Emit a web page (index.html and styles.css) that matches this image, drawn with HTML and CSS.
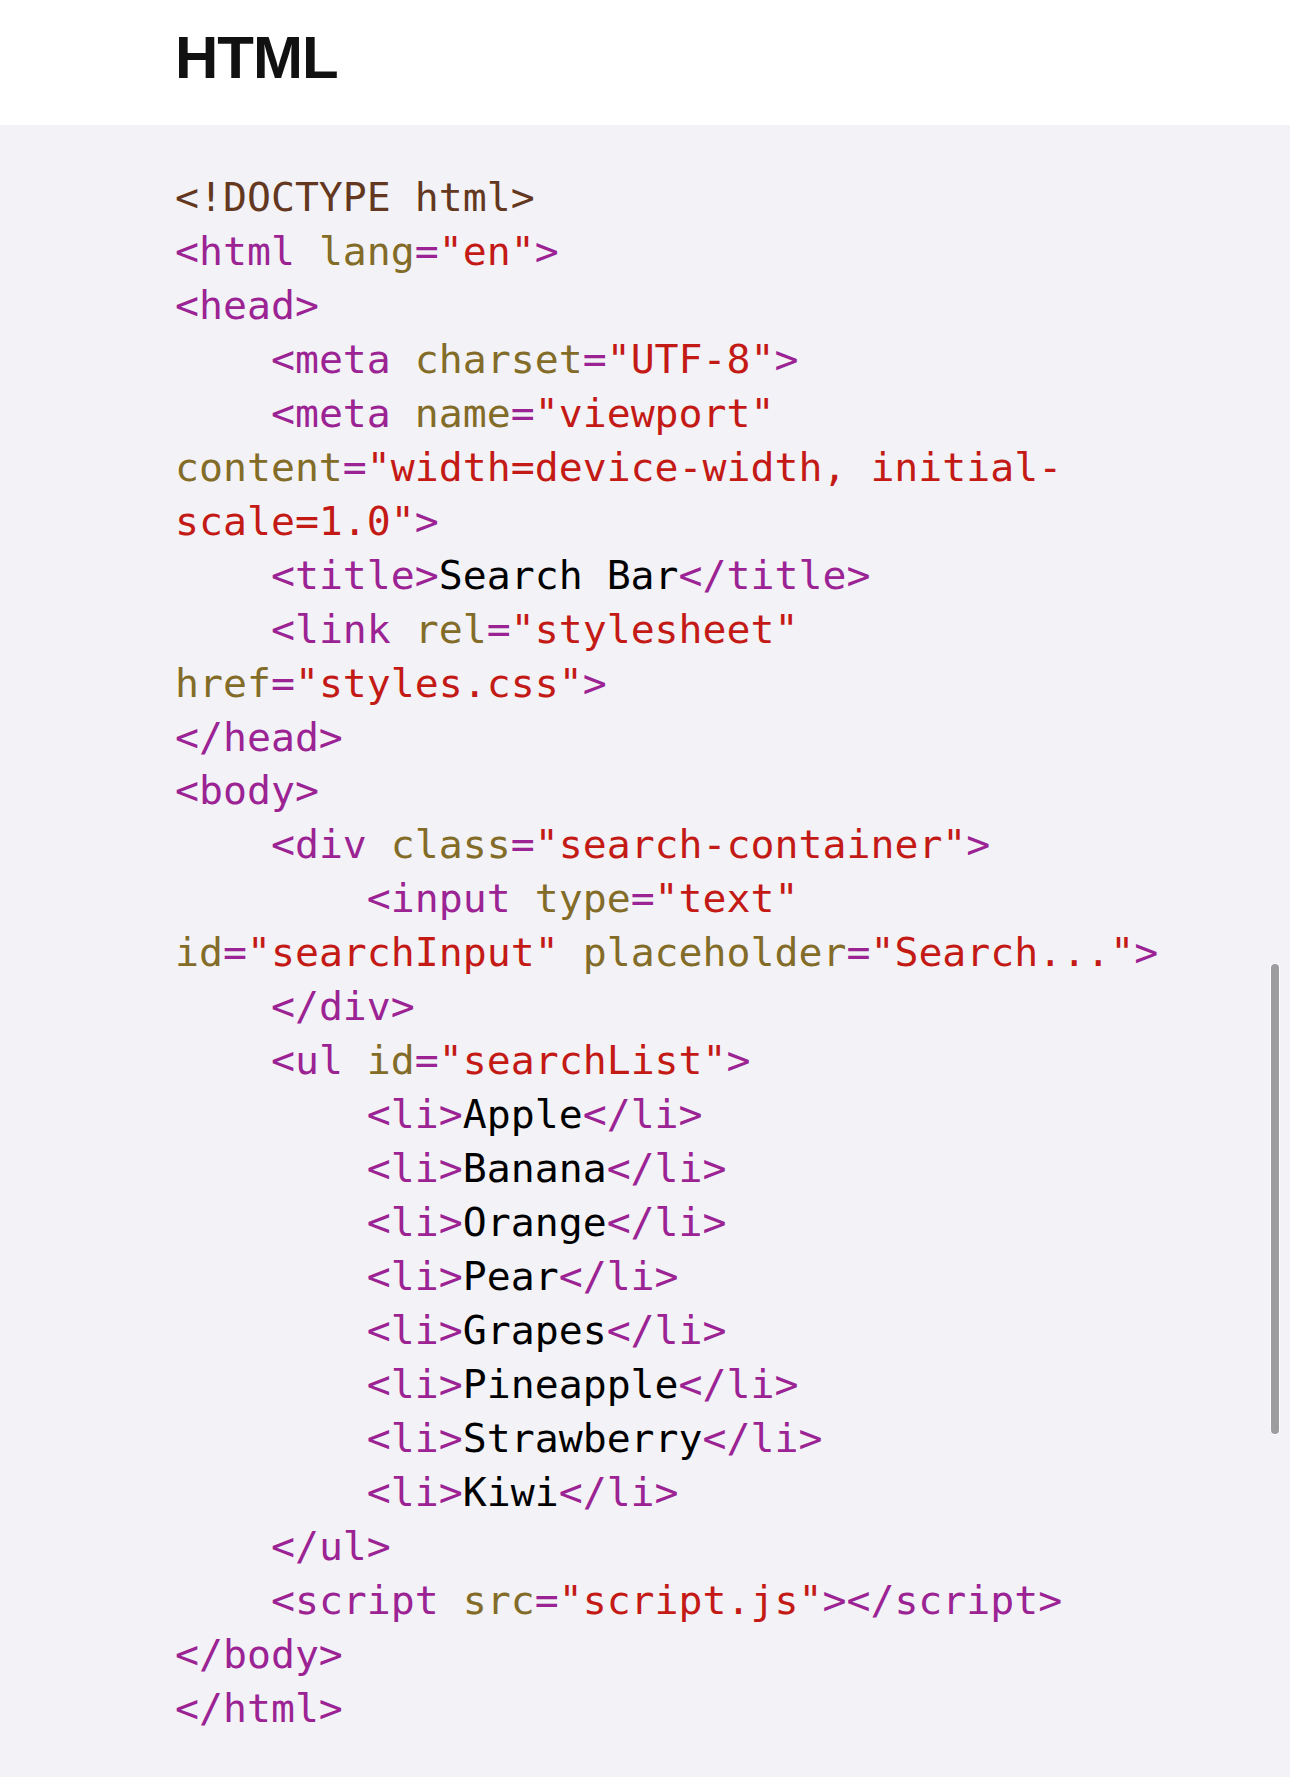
FILE: index.html
```html
<!DOCTYPE html>
<html lang="en">
<head>
<meta charset="UTF-8">
<title>HTML</title>
<link rel="stylesheet" href="styles.css">
</head>
<body>
<header class="page-head">
  <h1 class="title">HTML</h1>
</header>
<main class="code-area">
<pre class="code"><span class="dt">&lt;!DOCTYPE html&gt;</span>
<span class="tg">&lt;html</span> <span class="at">lang</span><span class="tg">=</span><span class="st">"en"</span><span class="tg">&gt;</span>
<span class="tg">&lt;head&gt;</span>
    <span class="tg">&lt;meta</span> <span class="at">charset</span><span class="tg">=</span><span class="st">"UTF-8"</span><span class="tg">&gt;</span>
    <span class="tg">&lt;meta</span> <span class="at">name</span><span class="tg">=</span><span class="st">"viewport"</span>
<span class="at">content</span><span class="tg">=</span><span class="st">"width=device-width, initial-</span>
<span class="st">scale=1.0"</span><span class="tg">&gt;</span>
    <span class="tg">&lt;title&gt;</span>Search Bar<span class="tg">&lt;/title&gt;</span>
    <span class="tg">&lt;link</span> <span class="at">rel</span><span class="tg">=</span><span class="st">"stylesheet"</span>
<span class="at">href</span><span class="tg">=</span><span class="st">"styles.css"</span><span class="tg">&gt;</span>
<span class="tg">&lt;/head&gt;</span>
<span class="tg">&lt;body&gt;</span>
    <span class="tg">&lt;div</span> <span class="at">class</span><span class="tg">=</span><span class="st">"search-container"</span><span class="tg">&gt;</span>
        <span class="tg">&lt;input</span> <span class="at">type</span><span class="tg">=</span><span class="st">"text"</span>
<span class="at">id</span><span class="tg">=</span><span class="st">"searchInput"</span> <span class="at">placeholder</span><span class="tg">=</span><span class="st">"Search..."</span><span class="tg">&gt;</span>
    <span class="tg">&lt;/div&gt;</span>
    <span class="tg">&lt;ul</span> <span class="at">id</span><span class="tg">=</span><span class="st">"searchList"</span><span class="tg">&gt;</span>
        <span class="tg">&lt;li&gt;</span>Apple<span class="tg">&lt;/li&gt;</span>
        <span class="tg">&lt;li&gt;</span>Banana<span class="tg">&lt;/li&gt;</span>
        <span class="tg">&lt;li&gt;</span>Orange<span class="tg">&lt;/li&gt;</span>
        <span class="tg">&lt;li&gt;</span>Pear<span class="tg">&lt;/li&gt;</span>
        <span class="tg">&lt;li&gt;</span>Grapes<span class="tg">&lt;/li&gt;</span>
        <span class="tg">&lt;li&gt;</span>Pineapple<span class="tg">&lt;/li&gt;</span>
        <span class="tg">&lt;li&gt;</span>Strawberry<span class="tg">&lt;/li&gt;</span>
        <span class="tg">&lt;li&gt;</span>Kiwi<span class="tg">&lt;/li&gt;</span>
    <span class="tg">&lt;/ul&gt;</span>
    <span class="tg">&lt;script</span> <span class="at">src</span><span class="tg">=</span><span class="st">"script.js"</span><span class="tg">&gt;&lt;/script&gt;</span>
<span class="tg">&lt;/body&gt;</span>
<span class="tg">&lt;/html&gt;</span></pre>
<div class="scrollbar"></div>
</main>
</body>
</html>
```
FILE: styles.css
```css
html, body {
  margin: 0;
  padding: 0;
}
body {
  background: #f2f2f7;
  min-height: 100vh;
}
.page-head {
  background: #ffffff;
  height: 125px;
  box-sizing: border-box;
  padding: 28px 0 0 175px;
}
.title {
  margin: 0;
  font-family: "Liberation Sans", Arial, sans-serif;
  font-weight: 700;
  font-size: 60px;
  line-height: 60px;
  letter-spacing: -1px;
  color: #111111;
}
.code-area {
  position: relative;
  background: #f2f2f7;
  padding: 46px 0 40px 175px;
  min-height: 1600px;
  box-sizing: border-box;
}
.code {
  margin: 0;
  font-family: "DejaVu Sans Mono", "Liberation Mono", monospace;
  font-size: 39.85px;
  line-height: 53.95px;
  color: #000000;
  white-space: pre;
}
.dt { color: #643820; }
.tg { color: #9b2393; }
.at { color: #836c28; }
.st { color: #c41a16; }
.scrollbar {
  position: absolute;
  left: 1271px;
  top: 839px;
  width: 8px;
  height: 470px;
  border-radius: 4px;
  background: #9d9d9f;
  box-shadow: 0 0 0 1px rgba(255,255,255,0.8);
}
```
